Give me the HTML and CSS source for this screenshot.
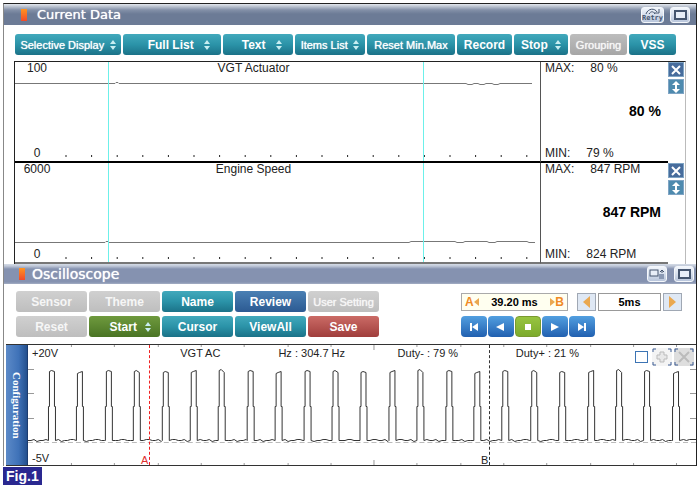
FILE: index.html
```
<!DOCTYPE html>
<html lang="en">
<head>
    <meta charset="UTF-8">
    <meta name="viewport" content="width=device-width, initial-scale=1.0">
    <title>Current Data / Oscilloscope</title>
    <link rel="stylesheet" href="styles.css">
</head>
<body>
    <main class="window">
        <header class="title-bar data-title">
            <span class="marker"></span>
            <h1>Current Data</h1>
            <button class="title-btn retry" type="button">
                <svg width="18" height="7" viewBox="0 0 18 7"><path d="M2 6C4 0 11 0 13 4M10 5h5V1M5 6c2-3 4-3 6 0" /></svg>
                <span>Retry</span>
            </button>
            <button class="title-btn" type="button" aria-label="Maximize">
                <svg width="13" height="10" viewBox="0 0 13 10"><rect class="pane" x="1" y="1" width="11" height="8" /></svg>
            </button>
        </header>

        <nav class="toolbar">
            <button class="btn selective compact" type="button">Selective Display <i class="spin"></i></button>
            <button class="btn full-list" type="button">Full List <i class="spin"></i></button>
            <button class="btn text" type="button">Text <i class="spin"></i></button>
            <button class="btn items compact" type="button">Items List <i class="spin"></i></button>
            <button class="btn reset-minmax compact" type="button">Reset Min.Max</button>
            <button class="btn record" type="button">Record</button>
            <button class="btn stop" type="button">Stop <i class="spin"></i></button>
            <button class="btn grouping dim compact" type="button">Grouping</button>
            <button class="btn vss" type="button">VSS</button>
        </nav>

        <section class="channels">
            <article class="channel">
                <div class="plot">
                    <svg class="trace" viewBox="0 0 525 99" preserveAspectRatio="none">
                        <path class="ticks" d="M50.5 94H518" />
                        <path class="line" d="M0 21.5H100l1-1h2l1 1H451l2 1h4l2-1h4l2 1h4l2-1h6l2 1h4l2-1h32" />
                        <path class="cursor" d="M93.5 0V99M408.5 0V99" />
                    </svg>
                    <span class="scale">100</span>
                    <h2>VGT Actuator</h2>
                    <span class="scale low">0</span>
                </div>
                <div class="readout">
                    <p><span>MAX:</span><span>80 %</span></p>
                    <strong>80 %</strong>
                    <p><span>MIN:</span><span>79 %</span></p>
                </div>
                <div class="side">
                    <button class="side-btn close" type="button" aria-label="Close">
                        <svg width="12" height="12" viewBox="0 0 12 12"><path d="M2 2l8 8M10 2l-8 8" /></svg>
                    </button>
                    <button class="side-btn" type="button" aria-label="Resize">
                        <svg width="12" height="12" viewBox="0 0 12 12"><path d="M6 2v8" /><path class="solid" d="M6 0l4 4H2zM6 12l4-4H2z" /></svg>
                    </button>
                </div>
            </article>
            <article class="channel">
                <div class="plot">
                    <svg class="trace" viewBox="0 0 525 99" preserveAspectRatio="none">
                        <path class="ticks" d="M50.5 95H518" />
                        <path class="line" d="M0 79.5H90l1-1h2l1 1H394l2-1h44l2 1h6l2-1h22l2 1h6l2-1h30l2 1h6" />
                        <path class="cursor" d="M93.5 0V99M408.5 0V99" />
                    </svg>
                    <span class="scale">6000</span>
                    <h2>Engine Speed</h2>
                    <span class="scale low">0</span>
                </div>
                <div class="readout">
                    <p><span>MAX:</span><span>847 RPM</span></p>
                    <strong>847 RPM</strong>
                    <p><span>MIN:</span><span>824 RPM</span></p>
                </div>
                <div class="side">
                    <button class="side-btn close" type="button" aria-label="Close">
                        <svg width="12" height="12" viewBox="0 0 12 12"><path d="M2 2l8 8M10 2l-8 8" /></svg>
                    </button>
                    <button class="side-btn" type="button" aria-label="Resize">
                        <svg width="12" height="12" viewBox="0 0 12 12"><path d="M6 2v8" /><path class="solid" d="M6 0l4 4H2zM6 12l4-4H2z" /></svg>
                    </button>
                </div>
            </article>
        </section>

        <header class="title-bar scope-title">
            <span class="marker"></span>
            <h1>Oscilloscope</h1>
            <button class="title-btn" type="button" aria-label="Split view">
                <svg width="16" height="12" viewBox="0 0 16 12"><rect class="pane thin" x="1" y="2" width="8" height="6" /><rect class="fill" x="10" y="6" width="5" height="5" /><path d="M13 5V2M11 4l2-2 2 2" /></svg>
            </button>
            <button class="title-btn" type="button" aria-label="Maximize">
                <svg width="13" height="10" viewBox="0 0 13 10"><rect class="pane" x="1" y="1" width="11" height="8" /></svg>
            </button>
        </header>

        <section class="controls">
            <div class="actions">
                <button class="btn dim" type="button">Sensor</button>
                <button class="btn dim" type="button">Theme</button>
                <button class="btn" type="button">Name</button>
                <button class="btn blue" type="button">Review</button>
                <button class="btn dim compact" type="button">User Setting</button>
                <button class="btn dim" type="button">Reset</button>
                <button class="btn green" type="button">Start <i class="spin"></i></button>
                <button class="btn" type="button">Cursor</button>
                <button class="btn" type="button">ViewAll</button>
                <button class="btn red" type="button">Save</button>
            </div>
            <div class="timing">
                <div class="timing-row">
                    <div class="interval">
                        <b>A</b><i class="arrow left"></i>
                        <output>39.20 ms</output>
                        <i class="arrow right"></i><b>B</b>
                    </div>
                    <div class="timebase">
                        <button class="step" type="button" aria-label="Shorter"><i class="arrow left big"></i></button>
                        <input type="text" value="5ms" aria-label="Time base">
                        <button class="step" type="button" aria-label="Longer"><i class="arrow right big"></i></button>
                    </div>
                </div>
                <div class="player">
                    <button type="button" aria-label="First"><svg width="12" height="10" viewBox="0 0 12 10"><path d="M2 1h2v8H2zM10 1v8L4 5z" /></svg></button>
                    <button type="button" aria-label="Back"><svg width="12" height="10" viewBox="0 0 12 10"><path d="M9 1v8L1 5z" /></svg></button>
                    <button class="active" type="button" aria-label="Stop"><svg width="12" height="10" viewBox="0 0 12 10"><path d="M3 2h6v6H3z" /></svg></button>
                    <button type="button" aria-label="Forward"><svg width="12" height="10" viewBox="0 0 12 10"><path d="M2 1v8l8-4z" /></svg></button>
                    <button type="button" aria-label="Last"><svg width="12" height="10" viewBox="0 0 12 10"><path d="M8 1h2v8H8zM2 1v8l6-4z" /></svg></button>
                </div>
            </div>
        </section>

        <section class="scope">
            <button class="config" type="button">Configuration</button>
            <div class="screen">
                <svg class="trace" viewBox="0 0 669 120" preserveAspectRatio="none">
                    <path class="grid" id="grid" d="" />
                    <path class="zero" d="M0 97.5H669" />
                    <path class="wave" id="wave" d="" />
                </svg>
                <span class="cursor-line cursor-a">A</span>
                <span class="cursor-line cursor-b">B</span>
                <div class="screen-info">
                    <span>+20V</span>
                    <span>VGT AC</span>
                    <span>Hz : 304.7 Hz</span>
                    <span>Duty- : 79 %</span>
                    <span>Duty+ : 21 %</span>
                    <div class="screen-tools">
                        <input type="checkbox" aria-label="Show channel">
                        <button type="button" aria-label="Move"><svg width="20" height="18" viewBox="0 0 20 18"><path class="corner" d="M1 4V1h3M16 1h3v3M19 14v3h-3M4 17H1v-3" /><path class="plus" d="M8 4h4v3h3v4h-3v3H8v-3H5V7h3z" /></svg></button>
                        <button class="grey" type="button" aria-label="Remove"><svg width="20" height="18" viewBox="0 0 20 18"><path class="corner" d="M1 4V1h3M16 1h3v3M19 14v3h-3M4 17H1v-3" /><path class="cross" d="M5 4l10 10M15 4L5 14" /></svg></button>
                    </div>
                </div>
                <span class="floor">-5V</span>
            </div>
        </section>
    </main>
    <footer class="figure-label">Fig.1</footer>

    <script>
        const ripple = [0, -1, 1, 0, 0, -1, -1, 0];
        const tops = [[0, 0], [2, 0], [0, 0], [0, 1], [1, 1], [1, -1], [-1, 1]];

        function drawWave() {
            const pulses = 23;
            let d = "M0 95.5";
            let x = 0;
            for (let i = 0; i < pulses; i++) {
                const start = 20.5 + Math.round(i * 28.4);
                let n = i;
                while (x + 3 < start) {
                    x += 3;
                    d += `L${x} ${95.5 + ripple[n++ % ripple.length]}`;
                }
                const [a, b] = tops[i % tops.length];
                d += `L${start} 95.5V61.5L${start + 1} 61.5V${26.5 + a}l2 -1L${start + 6} ${26.5 + b}V61.5L${start + 7} 61.5V95.5`;
                x = start + 7;
            }
            d += "l4 -1l3 1l3 -1H669";
            document.getElementById("wave").setAttribute("d", d);
        }

        function drawGrid() {
            let d = "M0 24.5h6M0 48.5h6M0 73.5h6M663 24.5h6M663 48.5h6M663 73.5h6";
            for (let i = 0; i < 15; i++) {
                const x = 43.5 + Math.round(i * 43.3);
                const h = i === 7 ? 5 : 2;
                d += `M${x} 0v${h}M${x} 120v-${h}`;
            }
            document.getElementById("grid").setAttribute("d", d);
        }

        drawWave();
        drawGrid();
    </script>
</body>
</html>
```
FILE: styles.css
```
* {
    box-sizing: border-box;
}

body {
    font-family: "Liberation Sans", Arial, sans-serif;
    font-size: 12px;
    line-height: 12px;
    margin: 0;
    padding: 3px 3px 0;
    background-color: white;
    color: #222;
}

h1, h2, p {
    margin: 0;
    font-weight: normal;
}

button, input {
    font: inherit;
    margin: 0;
    padding: 0;
    border: none;
}

svg {
    display: block;
}

.window {
    border: 1px solid #222;
    border-left-color: #888;
    border-bottom: none;
}

/* title bars */
.title-bar {
    display: flex;
    align-items: center;
    color: white;
}

.title-bar h1 {
    flex: 1;
    font-family: "DejaVu Sans", sans-serif;
    text-shadow: 0 0 1px white;
}

.data-title {
    height: 21px;
    gap: 6px;
    padding: 0 6px 0 17px;
    background: linear-gradient(#e4e8ee, #8390a8 6px, #6c7b96 10px, #6c7b96);
}

.data-title h1 {
    font-size: 13px;
    padding-left: 4px;
}

.scope-title {
    height: 20px;
    gap: 7px;
    padding: 0 2px 0 15px;
    background: linear-gradient(#d5dbe6, #c0c8d8 2px, #8592b0 5px, #8592b0 18px, #a4aec4);
}

.scope-title h1 {
    font-size: 14px;
}

.marker {
    width: 6px;
    height: 12px;
    background: linear-gradient(#ff9420, #f24a2a);
}

.title-btn {
    display: flex;
    flex-direction: column;
    align-items: center;
    justify-content: center;
    width: 20px;
    height: 16px;
    border: 1px solid #f4f7fb;
    border-radius: 3px;
    background: linear-gradient(#f2f6fc, #b9c6dc);
    color: #45556f;
}

.title-btn.retry {
    width: 23px;
}

.title-btn span {
    font: bold 7px/7px "DejaVu Sans Mono", monospace;
}

.title-btn svg {
    fill: none;
    stroke: #45556f;
}

.title-btn .pane {
    fill: #e8eef8;
    stroke-width: 2;
}

.title-btn .thin {
    stroke-width: 1;
}

.title-btn .fill {
    fill: #8a99b4;
    stroke: none;
}

/* push buttons */
.btn {
    display: flex;
    align-items: center;
    justify-content: space-evenly;
    height: 21px;
    border-radius: 3px;
    background: linear-gradient(#42a9bc, #2b93a8 50%, #1b7288);
    color: white;
    font-weight: bold;
    white-space: nowrap;
}

.btn.compact {
    font-size: 11px;
    font-weight: normal;
    text-shadow: 0 0 1px white;
}

.btn.dim {
    background: linear-gradient(#d0d0d0, #bebebe);
    color: #f6f6f6;
}

.btn.blue {
    background: linear-gradient(#4a80b4, #2c5a92);
}

.btn.green {
    background: linear-gradient(#6f9a3e, #4a7424);
}

.btn.red {
    background: linear-gradient(#cb6b66, #a03e3c);
}

.spin {
    display: flex;
    flex-direction: column;
    gap: 2px;
}

.spin::before,
.spin::after {
    content: "";
    border: 3px solid transparent;
}

.spin::before {
    border-top: none;
    border-bottom: 4px solid #c8eef2;
}

.spin::after {
    border-bottom: none;
    border-top: 4px solid #c8eef2;
}

.toolbar {
    display: flex;
    gap: 2px;
    padding: 9px 20px 6px 11px;
}

.selective { flex: 1 1 106px; }
.full-list { flex: 1 1 98px; padding-left: 14px; }
.text { flex: 1 1 70px; padding-left: 8px; }
.items { flex: 1 1 70px; }
.reset-minmax { flex: 1 1 88px; }
.record { flex: 1 1 55px; }
.stop { flex: 1 1 54px; }
.grouping { flex: 1 1 57px; }
.vss { flex: 1 1 47px; }

.btn.grouping {
    background: linear-gradient(#bdbdbd, #a6a6a6);
}

/* data channels */
.channels {
    margin: 0 10px;
    border: 1px solid #222;
    border-right-color: #bbb;
    border-bottom: none;
}

.channel {
    display: grid;
    grid-template-columns: 1fr 128px 17px;
}

.plot,
.readout {
    height: 101px;
    border-bottom: 2px solid black;
}

.channel:last-child .plot,
.channel:last-child .readout {
    border-bottom-color: #777;
}

.plot {
    position: relative;
    display: grid;
    grid-template-columns: 44px 1fr 92px;
    align-content: space-between;
    padding-bottom: 2px;
    text-align: center;
}

.plot h2 {
    font-size: 12px;
}

.low {
    grid-column: 1;
}

.trace {
    position: absolute;
    top: 0;
    left: 0;
    width: 100%;
    height: 100%;
    fill: none;
}

.line {
    stroke: #777;
}

.cursor {
    stroke: #6cf0ea;
    shape-rendering: crispEdges;
}

.ticks {
    stroke: #222;
    stroke-width: 2;
    stroke-dasharray: 1 24.6;
}

.readout {
    display: flex;
    flex-direction: column;
    justify-content: space-between;
    padding: 0 7px 2px 4px;
    border-left: 1px solid #555;
}

.readout p {
    display: flex;
    gap: 16px;
}

.readout strong {
    font-size: 14px;
    text-align: right;
    color: black;
}

.side {
    display: flex;
    flex-direction: column;
    gap: 2px;
}

.side-btn {
    display: flex;
    align-items: center;
    justify-content: center;
    width: 16px;
    height: 15px;
    border: 1px solid #7fa4c4;
    background: #4e8aae;
}

.side-btn.close {
    background: #476c9c;
}

.side-btn svg {
    fill: none;
    stroke: white;
    stroke-width: 2;
}

.side-btn .solid {
    fill: white;
    stroke: none;
}

/* oscilloscope controls */
.controls {
    display: flex;
    justify-content: space-between;
    padding: 7px 14px 7px 12px;
}

.actions {
    display: grid;
    grid-template-columns: repeat(5, 71px);
    gap: 4px 2px;
}

.btn.green {
    padding-left: 12px;
}

.timing {
    display: flex;
    flex-direction: column;
    gap: 4px;
    width: 221px;
}

.timing-row {
    display: flex;
    align-items: center;
    justify-content: space-between;
    height: 21px;
}

.interval,
.timebase {
    display: flex;
    align-items: center;
    height: 18px;
    font-size: 11px;
    font-weight: bold;
    color: black;
}

.interval {
    width: 107px;
    padding: 0 3px;
    border: 1px solid #aaa;
    background: #fffff0;
}

.interval b {
    font-size: 12px;
    color: #f08a24;
}

.interval output {
    flex: 1;
    text-align: center;
}

.arrow {
    border: 4px solid transparent;
}

.arrow.left {
    border-left: none;
    border-right: 5px solid #eaa850;
}

.arrow.right {
    border-right: none;
    border-left: 5px solid #eaa850;
}

.arrow.big {
    border-top-width: 6px;
    border-bottom-width: 6px;
}

.arrow.left.big {
    border-right-width: 7px;
}

.arrow.right.big {
    border-left-width: 7px;
}

.timebase {
    gap: 2px;
}

.timebase input {
    width: 63px;
    height: 18px;
    border: 1px solid #999;
    background: white;
    text-align: center;
}

.step {
    display: flex;
    align-items: center;
    justify-content: center;
    width: 19px;
    height: 18px;
    border: 1px solid #a0a8b4;
    background: #dfe8f4;
}

.player {
    display: flex;
    gap: 1px;
}

.player button {
    display: flex;
    align-items: center;
    justify-content: center;
    width: 26px;
    height: 21px;
    border-radius: 4px;
    background: linear-gradient(#529fe0, #2160b0);
}

.player .active {
    border: 1px solid #7a9a30;
    background: linear-gradient(#98c440, #7cab2c);
}

.player svg {
    fill: white;
}

/* oscilloscope screen */
.scope {
    display: flex;
    margin-left: 2px;
    border: 1px solid #333;
    border-width: 1px 0;
}

.config {
    width: 22px;
    border-right: 1px solid #1c3c70;
    background: linear-gradient(to right, #5c8ac8, #3f72b8 60%, #24508e);
    color: white;
    font: bold 11px/20px "Liberation Serif", serif;
    writing-mode: vertical-rl;
}

.screen {
    position: relative;
    flex: 1;
    display: flex;
    flex-direction: column;
    justify-content: space-between;
    height: 120px;
    font-size: 11px;
}

.wave {
    stroke: #333;
}

.grid {
    stroke: #999;
}

.zero {
    stroke: #bbb;
    stroke-dasharray: 5 3;
}

.screen-info {
    position: relative;
    display: grid;
    grid-template-columns: 148fr 98fr 119fr 118fr 119fr 61px;
    padding: 2px 0 0 4px;
}

.screen-tools {
    display: flex;
    align-items: center;
    gap: 2px;
    padding-top: 1px;
}

.screen-tools input {
    appearance: none;
    width: 13px;
    height: 12px;
    margin-right: 2px;
    border: 1px solid #3c74b4;
    background: white;
}

.screen-tools button {
    background: #f4f4f4;
}

.screen-tools .grey {
    background: #dedede;
}

.screen-tools svg {
    fill: none;
    stroke: #bbb;
}

.screen-tools .corner {
    stroke: #3c5c94;
}

.screen-tools .plus {
    fill: #e8e8e8;
}

.screen-tools .cross {
    stroke-width: 2;
}

.floor {
    padding: 0 0 1px 4px;
}

.cursor-line {
    position: absolute;
    top: 0;
    bottom: 0;
    display: flex;
    align-items: flex-end;
    padding-right: 1px;
    border-right: 1px dashed #333;
    line-height: 9px;
}

.cursor-a {
    right: 81.7%;
    border-right-color: #f02020;
    color: #e03030;
}

.cursor-b {
    right: 30.8%;
}

.figure-label {
    width: fit-content;
    margin-top: 1px;
    padding: 0 3px;
    background: #2a2890;
    color: white;
    font-size: 14px;
    font-weight: bold;
    line-height: 18px;
}
```
